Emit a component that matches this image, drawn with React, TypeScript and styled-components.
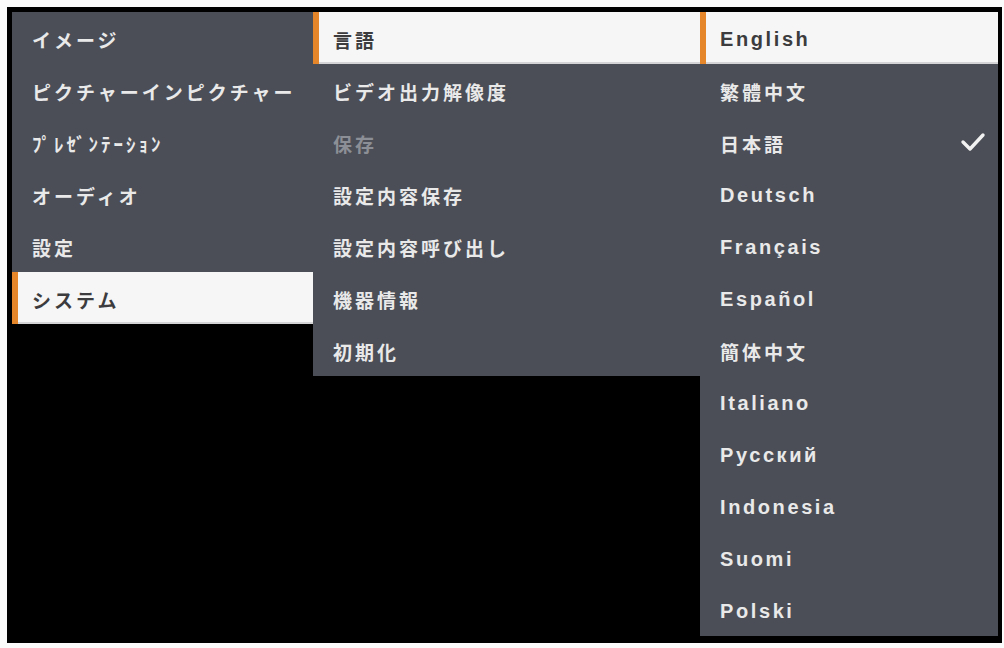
import React from 'react';
import styled, {createGlobalStyle} from 'styled-components';

const GlobalStyle = createGlobalStyle`
  html, body {
    margin: 0;
    padding: 0;
    background: #fbfbfb;
  }
  * {
    box-sizing: border-box;
  }
`

type Item = {
    label: string;
    selected?: boolean;
    disabled?: boolean;
    checked?: boolean;
    latin?: boolean;
};

const mainMenu: Item[] = [
    {label: 'イメージ'},
    {label: 'ピクチャーインピクチャー'},
    {label: 'ﾌﾟﾚｾﾞﾝﾃｰｼｮﾝ'},
    {label: 'オーディオ'},
    {label: '設定'},
    {label: 'システム', selected: true},
];

const systemMenu: Item[] = [
    {label: '言語', selected: true},
    {label: 'ビデオ出力解像度'},
    {label: '保存', disabled: true},
    {label: '設定内容保存'},
    {label: '設定内容呼び出し'},
    {label: '機器情報'},
    {label: '初期化'},
];

const languages: Item[] = [
    {label: 'English', selected: true, latin: true},
    {label: '繁體中文'},
    {label: '日本語', checked: true},
    {label: 'Deutsch', latin: true},
    {label: 'Français', latin: true},
    {label: 'Español', latin: true},
    {label: '簡体中文'},
    {label: 'Italiano', latin: true},
    {label: 'Русский', latin: true},
    {label: 'Indonesia', latin: true},
    {label: 'Suomi', latin: true},
    {label: 'Polski', latin: true},
];

const CheckMark = () => (
    <svg width="26" height="22" viewBox="0 0 26 22">
        <polyline points="3,11 10,18 23,4" fill="none" stroke="#f2f2f2" strokeWidth="3.4"
                  strokeLinecap="round" strokeLinejoin="round"/>
    </svg>
);

const MenuColumn: React.FC<{ items: Item[]; width: number }> = ({items, width}) => (
    <StyledPanel $width={width}>
        {items.map(item => (
            <StyledRow key={item.label} $selected={!!item.selected}>
                <StyledLabel $latin={!!item.latin} $selected={!!item.selected} $disabled={!!item.disabled}>
                    {item.label}
                </StyledLabel>
                {item.checked && <CheckMark/>}
            </StyledRow>
        ))}
    </StyledPanel>
);

export default function App() {
    return (
        <>
            <GlobalStyle/>
            <StyledScreen>
                <MenuColumn items={mainMenu} width={301}/>
                <MenuColumn items={systemMenu} width={387}/>
                <MenuColumn items={languages} width={298}/>
            </StyledScreen>
        </>
    );
}

const StyledScreen = styled.div`
  margin: 7px 0 0 7px;
  width: 995px;
  height: 636px;
  background: #000;
  padding: 5px 0 0 5px;
  display: flex;
  align-items: flex-start;
`
const StyledPanel = styled.div<{ $width: number }>`
  width: ${p => p.$width}px;
  background: #4b4e56;
  display: flex;
  flex-direction: column;
`
const StyledRow = styled.div<{ $selected: boolean }>`
  height: 52px;
  display: flex;
  align-items: center;
  justify-content: space-between;
  padding: 0 12px 0 20px;
  background: ${p => p.$selected ? '#f6f6f6' : 'transparent'};
  border-left: ${p => p.$selected ? '6px solid #e5862b' : 'none'};
  padding-left: ${p => p.$selected ? '14px' : '20px'};
  box-shadow: ${p => p.$selected ? 'inset 0 -2px 0 #d4d4d6' : 'none'};
`
const StyledLabel = styled.span<{ $latin: boolean; $selected: boolean; $disabled: boolean }>`
  font-family: ${p => p.$latin
    ? '"Liberation Sans", Arial, sans-serif'
    : '"Noto Sans CJK JP", "Noto Sans CJK SC", sans-serif'};
  font-size: ${p => p.$latin ? '20px' : '19px'};
  font-weight: 700;
  letter-spacing: ${p => p.$latin ? '2.6px' : '3px'};
  color: ${p => p.$disabled ? '#8c8f96' : p.$selected ? '#3c3c3e' : '#e9e9ea'};
  white-space: nowrap;
  padding-top: 2px;
`
